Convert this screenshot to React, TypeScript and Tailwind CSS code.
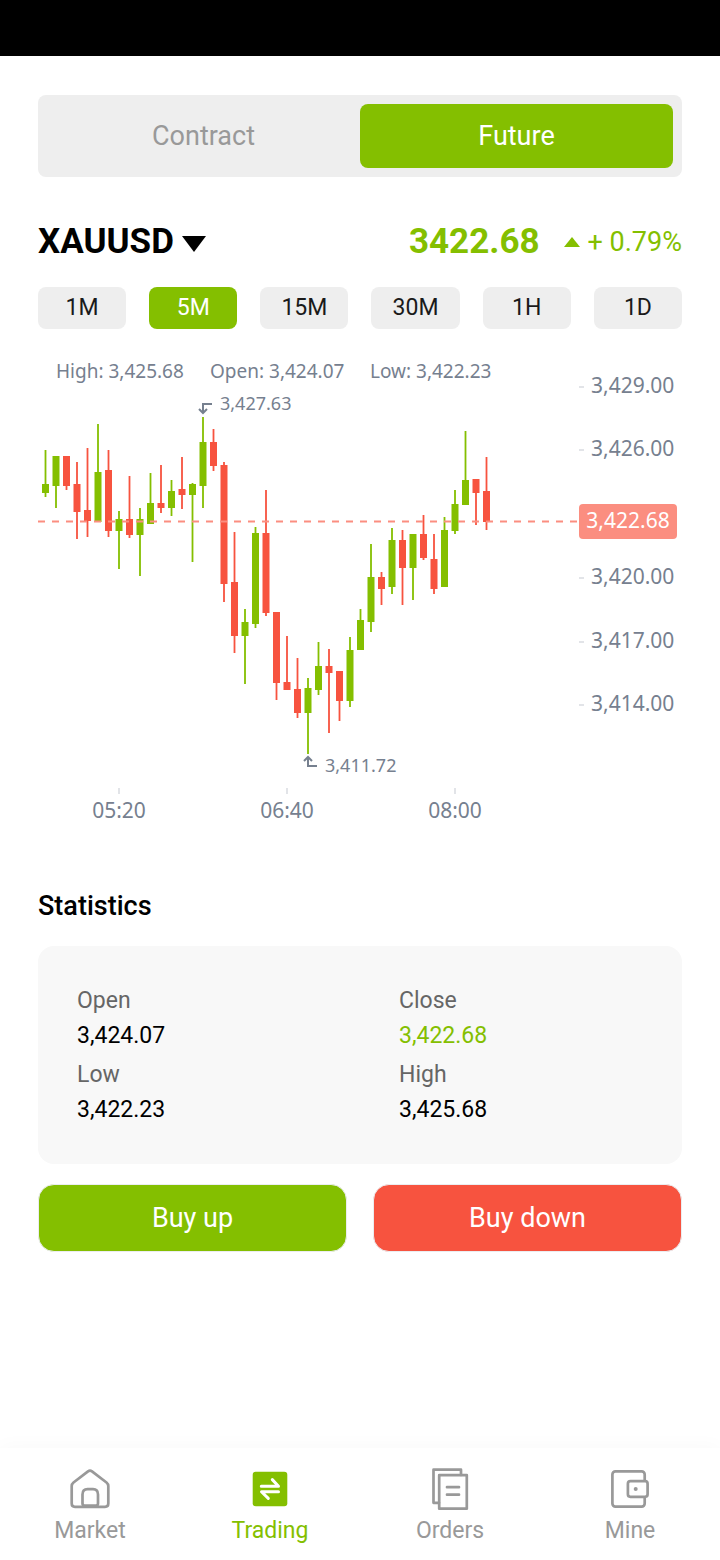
import { useState } from 'react'
import type { ReactNode } from 'react'
import clsx from 'clsx'

const UP = '#84bf00'
const DOWN = '#f7533f'
const MUTED = '#76808f'

// high, body top, body bottom, low (chart units), direction
type Candle = [number, number, number, number, 'up' | 'down']

const candles: Candle[] = [
  [100, 134, 143, 147, 'up'],
  [106, 106, 136, 158, 'up'],
  [106, 106, 136, 140, 'down'],
  [112, 134, 162, 189, 'down'],
  [98, 160, 171, 187, 'down'],
  [74, 122, 172, 172, 'up'],
  [100, 120, 181, 187, 'down'],
  [161, 169, 181, 219, 'up'],
  [126, 169, 185, 188, 'down'],
  [158, 169, 185, 226, 'up'],
  [123, 153, 174, 174, 'up'],
  [115, 153, 158, 163, 'down'],
  [130, 141, 158, 166, 'up'],
  [107, 139, 145, 159, 'down'],
  [133, 134, 145, 212, 'up'],
  [67, 92, 136, 158, 'up'],
  [79, 92, 116, 121, 'down'],
  [112, 115, 234, 252, 'down'],
  [182, 232, 286, 303, 'down'],
  [259, 272, 286, 334, 'up'],
  [177, 183, 274, 278, 'up'],
  [140, 183, 263, 266, 'down'],
  [262, 262, 333, 350, 'down'],
  [286, 332, 340, 340, 'down'],
  [308, 339, 363, 368, 'down'],
  [328, 338, 363, 404, 'up'],
  [292, 316, 340, 345, 'up'],
  [299, 316, 323, 383, 'down'],
  [321, 321, 351, 371, 'down'],
  [287, 300, 351, 357, 'up'],
  [259, 270, 300, 300, 'up'],
  [194, 227, 272, 282, 'up'],
  [222, 227, 239, 255, 'down'],
  [178, 190, 237, 244, 'up'],
  [180, 190, 218, 255, 'down'],
  [184, 184, 218, 250, 'up'],
  [165, 184, 208, 210, 'down'],
  [184, 209, 239, 244, 'down'],
  [167, 180, 237, 237, 'up'],
  [140, 154, 181, 184, 'up'],
  [81, 130, 155, 155, 'up'],
  [129, 129, 143, 175, 'down'],
  [107, 141, 172, 180, 'down'],
]

const priceTicks = [
  { label: '3,429.00', y: 36 },
  { label: '3,426.00', y: 99 },
  { label: '3,420.00', y: 227 },
  { label: '3,417.00', y: 291 },
  { label: '3,414.00', y: 354 },
]

const timeTicks = [
  { label: '05:20', x: 81 },
  { label: '06:40', x: 249 },
  { label: '08:00', x: 417 },
]

function CandleChart() {
  return (
    <svg
      viewBox="0 0 644 480"
      className="block w-full font-['Noto_Sans',sans-serif]"
      role="img"
      aria-label="XAUUSD price chart"
    >
      {candles.map(([high, top, bottom, low, dir], i) => {
        const x = 7.5 + i * 10.5
        const color = dir === 'up' ? UP : DOWN
        return (
          <g key={i} fill={color}>
            <rect x={x - 0.9} y={high} width={1.8} height={low - high} />
            <rect x={x - 3.5} y={top} width={7} height={bottom - top} />
          </g>
        )
      })}

      {/* Last price */}
      <path d="M0 171.5H540" stroke="#fb8e80" strokeWidth={1.8} strokeDasharray="7 7" />
      <rect x={541} y={154} width={98} height={35} rx={4} fill="#fb8e80" />
      <text x={590} y={178} fontSize={21} fill="#fff" textAnchor="middle">
        3,422.68
      </text>

      <g fill={MUTED} fontSize={19}>
        <text x={18} y={28}>High: 3,425.68</text>
        <text x={172} y={28}>Open: 3,424.07</text>
        <text x={332} y={28}>Low: 3,422.23</text>
      </g>

      {/* Highest and lowest marks */}
      <g fill="none" stroke={MUTED} strokeWidth={2}>
        <path d="M174 54H165V62M161 59L165 63L169 59" />
        <path d="M279 416H270V408M266 411L270 407L274 411" />
      </g>
      <g fill={MUTED} fontSize={18}>
        <text x={182} y={60}>3,427.63</text>
        <text x={287} y={422}>3,411.72</text>
      </g>

      {priceTicks.map(({ label, y }) => (
        <g key={label}>
          <path d={`M541 ${y + 1}H546`} stroke="#d8dbe0" strokeWidth={1.5} />
          <text x={553} y={y + 7} fontSize={21} fill={MUTED}>
            {label}
          </text>
        </g>
      ))}
      {timeTicks.map(({ label, x }) => (
        <g key={label}>
          <path d={`M${x} 438V444`} stroke="#d8dbe0" strokeWidth={1.5} />
          <text x={x} y={468} fontSize={21} fill={MUTED} textAnchor="middle">
            {label}
          </text>
        </g>
      ))}
    </svg>
  )
}

function NavIcon({ children }: { children: ReactNode }) {
  return (
    <svg
      viewBox="0 0 48 48"
      className="size-12"
      fill="none"
      stroke="currentColor"
      strokeWidth={2.7}
      strokeLinecap="round"
      strokeLinejoin="round"
      aria-hidden="true"
    >
      {children}
    </svg>
  )
}

const navItems = [
  {
    label: 'Market',
    icon: (
      <NavIcon>
        <path d="M22 6.4Q24 5 26 6.4L40.5 17.5Q42.3 19 42.3 21V38.5Q42.3 41.8 39 41.8H9Q5.7 41.8 5.7 38.5V21Q5.7 19 7.5 17.5Z" />
        <path d="M18.5 40.5Q16.5 40.5 16.5 38.5V29.5Q16.5 24.2 21.5 24.2H27Q32 24.2 32 29.5V38.5Q32 40.5 30 40.5Z" />
      </NavIcon>
    ),
  },
  {
    label: 'Trading',
    icon: (
      <NavIcon>
        <rect x="6.7" y="6.7" width="34.6" height="34.5" rx="3" fill="currentColor" stroke="none" />
        <path d="M15.300 21.200H32.500L26.300 14.600" stroke="#fff" strokeWidth="3" />
        <path d="M32.500 26.700H15.500L22.300 33.400" stroke="#fff" strokeWidth="3" />
      </NavIcon>
    ),
  },
  {
    label: 'Orders',
    icon: (
      <NavIcon>
        <path d="M35 10V4.7H7.5V37.8H13" />
        <rect x="13.2" y="10.2" width="27.6" height="33.5" />
        <path d="M21 22.2H33M21 29.7H33" />
      </NavIcon>
    ),
  },
  {
    label: 'Mine',
    icon: (
      <NavIcon>
        <rect x="6.4" y="6.4" width="32.3" height="35.2" rx="3" />
        <rect x="21.9" y="16.2" width="19.7" height="15.6" rx="2.5" fill="#fff" />
        <circle cx="29.7" cy="24" r="2" fill="currentColor" stroke="none" />
      </NavIcon>
    ),
  },
]

const intervals = ['1M', '5M', '15M', '30M', '1H', '1D']

const stats = [
  { label: 'Open', value: '3,424.07' },
  { label: 'Close', value: '3,422.68', highlight: true },
  { label: 'Low', value: '3,422.23' },
  { label: 'High', value: '3,425.68' },
]

export default function App() {
  const [mode, setMode] = useState('Future')
  const [interval, setInterval] = useState('5M')

  return (
    <div className="flex min-h-screen flex-col bg-white font-[Roboto,sans-serif] text-black">
      <div className="h-14 bg-black" />

      <main className="flex-1 px-[38px] pt-[39px]">
        <div className="grid grid-cols-2 rounded-lg bg-[#eeeeee] p-[9px]">
          {['Contract', 'Future'].map((item) => (
            <button
              key={item}
              type="button"
              onClick={() => setMode(item)}
              className={clsx(
                'h-16 rounded-lg text-[27px]',
                mode === item ? 'bg-[#84bf00] text-white' : 'text-[#999999]',
              )}
            >
              {item}
            </button>
          ))}
        </div>

        <div className="mt-[41px] flex h-12 items-center justify-between">
          <button type="button" className="flex items-center gap-2 text-[35px] font-bold">
            XAUUSD
            <svg viewBox="0 0 24 16" className="mt-1 h-4 w-6" fill="currentColor" aria-hidden="true">
              <path d="M0 0H24L12 16Z" />
            </svg>
          </button>
          <div className="flex items-center text-[#84bf00]">
            <span className="text-[35px] font-bold">3422.68</span>
            <svg viewBox="0 0 16 10" className="ml-6 h-2.5 w-4" fill="currentColor" aria-hidden="true">
              <path d="M8 0L16 10H0Z" />
            </svg>
            <span className="ml-2 text-[27px]">+ 0.79%</span>
          </div>
        </div>

        <div className="mt-[21px] grid grid-cols-6 gap-[23px]">
          {intervals.map((item) => (
            <button
              key={item}
              type="button"
              onClick={() => setInterval(item)}
              className={clsx(
                'h-[42px] rounded-lg text-[23px]',
                interval === item ? 'bg-[#84bf00] text-white' : 'bg-[#eeeeee] text-[#1a1a1a]',
              )}
            >
              {item}
            </button>
          ))}
        </div>

        <div className="mt-[21px]">
          <CandleChart />
        </div>

        <h2 className="mt-14 text-[27px] leading-10 font-medium">Statistics</h2>
        <dl className="mt-5 grid grid-cols-2 gap-y-1 rounded-2xl bg-[#f8f8f8] py-[37px]">
          {stats.map(({ label, value, highlight }) => (
            <div key={label} className="px-[39px] text-[23px] leading-[35px]">
              <dt className="text-[#666666]">{label}</dt>
              <dd className={clsx(highlight && 'text-[#84bf00]')}>{value}</dd>
            </div>
          ))}
        </dl>

        <div className="mt-5 grid grid-cols-2 gap-[26px] text-[27px] text-white">
          <button type="button" className="h-[68px] rounded-2xl border border-[#ebedf0] bg-[#84bf00]">
            Buy up
          </button>
          <button type="button" className="h-[68px] rounded-2xl border border-[#ebedf0] bg-[#f7533f]">
            Buy down
          </button>
        </div>
      </main>

      <nav className="grid grid-cols-4 bg-white pt-[17px] pb-3 shadow-[0_0_20px_rgba(0,0,0,0.03)]">
        {navItems.map(({ label, icon }) => (
          <a
            key={label}
            href={`#${label.toLowerCase()}`}
            className={clsx(
              'flex flex-col items-center text-[23px] leading-[35px]',
              label === 'Trading' ? 'text-[#84bf00]' : 'text-[#999999]',
            )}
          >
            {icon}
            {label}
          </a>
        ))}
      </nav>
    </div>
  )
}
